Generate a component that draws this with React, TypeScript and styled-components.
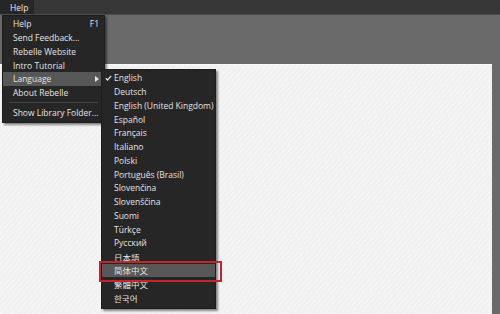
import React from "react";
import styled, { createGlobalStyle } from "styled-components";

const Global = createGlobalStyle`
  html, body { margin: 0; padding: 0; width: 500px; height: 314px; overflow: hidden; background: #6b6b6b; }
  * { box-sizing: border-box; }
  #root { width: 500px; height: 314px; }
`;

const Page = styled.div`
  position: relative;
  width: 500px;
  height: 314px;
  display: flex;
  flex-direction: column;
  font-family: "Open Sans", "Noto Sans", "Noto Sans CJK SC", sans-serif;
  font-size: 8.5px;
  color: #e4e4e4;
`;

const MenuBar = styled.div`
  height: 15px;
  background: #373737;
  border-bottom: 1px solid #4c4c4c;
  display: flex;
  align-items: stretch;
`;

const MenuTab = styled.div<{ $open?: boolean }>`
  width: 34px;
  display: flex;
  align-items: center;
  padding-left: 10px;
  background: ${(p) => (p.$open ? "#262626" : "transparent")};
  color: #e8e8e8;
`;

const Workspace = styled.div`
  flex: 1;
  background: #6a6a6a;
  padding: 49px 8px 0 0;
  display: flex;
`;

const Canvas = styled.div`
  flex: 1;
  background-color: #f2f2f2;
  background-image:
    repeating-linear-gradient(35deg, rgba(0,0,0,0.012) 0 1px, transparent 1px 3px),
    repeating-linear-gradient(-50deg, rgba(255,255,255,0.35) 0 1px, transparent 1px 4px);
  border-top: 1px solid #fafafa;
`;

const Menu = styled.div<{ $left: number; $top: number; $width: number }>`
  position: absolute;
  left: ${(p) => p.$left}px;
  top: ${(p) => p.$top}px;
  width: ${(p) => p.$width}px;
  background: #262626;
  border: 1px solid #1c1c1c;
  box-shadow: 2px 2px 2px rgba(0, 0, 0, 0.45);
  padding: 1px 0 3px;
  display: flex;
  flex-direction: column;
`;

const Item = styled.div<{ $active?: boolean; $indent: number }>`
  height: 13.75px;
  display: flex;
  align-items: center;
  padding-left: ${(p) => p.$indent}px;
  padding-right: 4px;
  background: ${(p) => (p.$active ? "#575757" : "transparent")};
  position: relative;
  white-space: nowrap;
`;

const Label = styled.span`
  flex: 1;
`;

const Shortcut = styled.span`
  margin-right: 1px;
`;

const Separator = styled.div`
  height: 1px;
  background: #444;
  margin: 2px 6px 3px 6px;
`;

const Arrow = styled.span`
  width: 0;
  height: 0;
  border-top: 3.5px solid transparent;
  border-bottom: 3.5px solid transparent;
  border-left: 4px solid #e6e6e6;
  margin-right: 1px;
`;

const Check = styled.svg`
  position: absolute;
  left: 3px;
  top: 4px;
`;

const Highlight = styled.div`
  position: absolute;
  left: 99px;
  top: 261px;
  width: 123px;
  height: 21px;
  border: 2px solid #c4242c;
`;

const languages = [
  "English",
  "Deutsch",
  "English (United Kingdom)",
  "Español",
  "Français",
  "Italiano",
  "Polski",
  "Português (Brasil)",
  "Slovenčina",
  "Slovenščina",
  "Suomi",
  "Türkçe",
  "Русский",
  "日本語",
  "简体中文",
  "繁體中文",
  "한국어",
];

export default function App() {
  return (
    <>
      <Global />
      <Page>
        <MenuBar>
          <MenuTab $open>Help</MenuTab>
        </MenuBar>
        <Workspace>
          <Canvas />
        </Workspace>

        <Menu $left={2} $top={15} $width={103}>
          <Item $indent={10}>
            <Label>Help</Label>
            <Shortcut>F1</Shortcut>
          </Item>
          <Item $indent={10}><Label>Send Feedback...</Label></Item>
          <Item $indent={10}><Label>Rebelle Website</Label></Item>
          <Item $indent={10}><Label>Intro Tutorial</Label></Item>
          <Item $indent={10} $active>
            <Label>Language</Label>
            <Arrow />
          </Item>
          <Item $indent={10}><Label>About Rebelle</Label></Item>
          <Separator />
          <Item $indent={10}><Label>Show Library Folder...</Label></Item>
        </Menu>

        <Menu $left={101} $top={69} $width={115}>
          {languages.map((l, i) => (
            <Item key={l} $indent={12} $active={l === "简体中文"}>
              {i === 0 && (
                <Check width="7" height="6" viewBox="0 0 7 6">
                  <path d="M0.8 3.2 L2.6 5 L6.2 0.8" stroke="#e6e6e6" strokeWidth="1.3" fill="none" />
                </Check>
              )}
              <Label>{l}</Label>
            </Item>
          ))}
        </Menu>

        <Highlight />
      </Page>
    </>
  );
}
